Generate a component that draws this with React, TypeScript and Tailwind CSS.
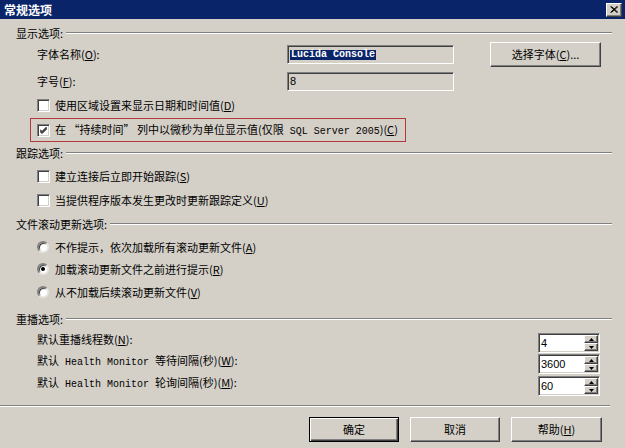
import React from "react";

const sunken =
  "border border-t-[#808080] border-l-[#808080] border-b-white border-r-white shadow-[inset_1px_1px_0_#404040,inset_-1px_-1px_0_#d4d0c8]";
const raised =
  "border border-t-white border-l-white border-b-[#404040] border-r-[#404040] shadow-[inset_-1px_-1px_0_#808080]";

const mono = "font-['Liberation_Mono',monospace] text-[10px]";

function Header({ label, cls }: { label: string; cls: string }) {
  return (
    <div className={"flex items-center h-[16px] " + cls}>
      <span>{label}</span>
      <div className="flex-1 ml-[3px] h-[2px] border-t border-t-[#808080] border-b border-b-white" />
    </div>
  );
}

function Check({ checked }: { checked?: boolean }) {
  return (
    <div className={"w-[13px] h-[13px] bg-white flex items-center justify-center shrink-0 " + sunken}>
      {checked && (
        <svg width="7" height="7" viewBox="0 0 7 7">
          <path d="M0 2 L2 4 L7 -1 M0 3 L2 5 L7 0 M0 4 L2 6 L7 1" stroke="#000" strokeWidth="1" fill="none" transform="translate(0,0.5)" />
        </svg>
      )}
    </div>
  );
}

function Radio({ checked }: { checked?: boolean }) {
  return (
    <div className="w-[12px] h-[12px] rounded-full bg-white border-2 border-t-[#808080] border-l-[#808080] border-r-[#e8e6e2] border-b-[#e8e6e2] shadow-[inset_1px_1px_0_#404040] flex items-center justify-center shrink-0">
      {checked && <div className="w-[4px] h-[4px] rounded-full bg-black" />}
    </div>
  );
}

function Spinner({ value, cls }: { value: string; cls: string }) {
  return (
    <div className={"w-[62px] h-[20px] bg-white flex items-stretch " + sunken + " " + cls}>
      <div className="flex-1 flex items-center pl-[2px] font-['Liberation_Sans',sans-serif] text-[11px]">{value}</div>
      <div className="w-[15px] flex flex-col py-[1px] pr-[1px]">
        <div className={"flex-1 bg-[#d4d0c8] flex items-center justify-center " + raised}>
          <svg width="5" height="3" viewBox="0 0 5 3"><path d="M2.5 0 L5 3 L0 3 Z" fill="#000" /></svg>
        </div>
        <div className={"flex-1 bg-[#d4d0c8] flex items-center justify-center " + raised}>
          <svg width="5" height="3" viewBox="0 0 5 3"><path d="M0 0 L5 0 L2.5 3 Z" fill="#000" /></svg>
        </div>
      </div>
    </div>
  );
}

function Btn({ children, def, cls }: { children: React.ReactNode; def?: boolean; cls?: string }) {
  const c = def
    ? "border border-black shadow-[inset_1px_1px_0_#ffffff,inset_-1px_-1px_0_#404040,inset_-2px_-2px_0_#808080]"
    : raised;
  return (
    <div className={"h-[25px] bg-[#d4d0c8] flex items-center justify-center " + c + " " + (cls || "")}>
      {children}
    </div>
  );
}

export default function App() {
  return (
    <div className="w-[625px] h-[448px] bg-[#d4d0c8] overflow-hidden font-['Noto_Sans_CJK_SC',sans-serif] text-[11px] text-black leading-none">
      <div className="h-[19px] bg-[#0a246a] flex items-center justify-between pl-[4px] pr-[3px]">
        <span className="text-white font-bold text-[12px]">常规选项</span>
        <div className={"w-[16px] h-[14px] bg-[#d4d0c8] flex items-center justify-center " + raised}>
          <svg width="8" height="7" viewBox="0 0 8 7">
            <path d="M0.5 0.5 L7 6.5 M1.5 0.5 L8 6.5 M7 0.5 L0.5 6.5 M8 0.5 L1.5 6.5" stroke="#000" strokeWidth="1" />
          </svg>
        </div>
      </div>

      <div className="pl-[16px] pr-[13px]">
        <Header label="显示选项:" cls="mt-[6px]" />

        <div className="flex items-center h-[25px] mt-[1px] pl-[21px]">
          <div className="w-[250px]">
            字体名称(<u>O</u>):
          </div>
          <div className={"w-[167px] h-[19px] flex items-center pl-[2px] " + sunken}>
            <span className={"bg-[#0a246a] text-white font-bold px-[1px] " + mono}>Lucida Console</span>
          </div>
          <Btn cls="w-[111px] ml-[36px]">
            选择字体(<u>C</u>)...
          </Btn>
        </div>

        <div className="flex items-center h-[20px] mt-[4px] pl-[21px]">
          <div className="w-[250px]">
            字号(<u>F</u>):
          </div>
          <div className={"w-[167px] h-[19px] flex items-center pl-[2px] font-['Liberation_Sans',sans-serif] " + sunken}>8</div>
        </div>

        <div className="flex items-center h-[16px] mt-[6px] pl-[21px]">
          <Check />
          <span className="ml-[5px]">
            使用区域设置来显示日期和时间值(<u>D</u>)
          </span>
        </div>

        <div className="flex items-center h-[24px] mt-[5px] ml-[14px] w-[376px] border border-[#b03a3a] pl-[6px]">
          <Check checked />
          <span className="ml-[5px] whitespace-nowrap">
            在 “持续时间” 列中以微秒为单位显示值(仅限<span className={mono}> SQL Server 2005</span>)(<u>C</u>)
          </span>
        </div>

        <Header label="跟踪选项:" cls="mt-[3px]" />

        <div className="flex items-center h-[16px] mt-[7px] pl-[21px]">
          <Check />
          <span className="ml-[5px]">
            建立连接后立即开始跟踪(<u>S</u>)
          </span>
        </div>
        <div className="flex items-center h-[16px] mt-[8px] pl-[21px]">
          <Check />
          <span className="ml-[5px]">
            当提供程序版本发生更改时更新跟踪定义(<u>U</u>)
          </span>
        </div>

        <Header label="文件滚动更新选项:" cls="mt-[8px]" />

        <div className="flex items-center h-[16px] mt-[7px] pl-[21px]">
          <Radio />
          <span className="ml-[6px]">
            不作提示，依次加载所有滚动更新文件(<u>A</u>)
          </span>
        </div>
        <div className="flex items-center h-[16px] mt-[6px] pl-[21px]">
          <Radio checked />
          <span className="ml-[6px]">
            加载滚动更新文件之前进行提示(<u>R</u>)
          </span>
        </div>
        <div className="flex items-center h-[16px] mt-[7px] pl-[21px]">
          <Radio />
          <span className="ml-[6px]">
            从不加载后续滚动更新文件(<u>V</u>)
          </span>
        </div>

        <Header label="重播选项:" cls="mt-[11px]" />

        <div className="flex items-start justify-between h-[20px] mt-[6px] pl-[21px] pr-[12px]">
          <span className="mt-[1px]">
            默认重播线程数(<u>N</u>):
          </span>
          <Spinner value="4" cls="" />
        </div>
        <div className="flex items-start justify-between h-[20px] mt-[1px] pl-[21px] pr-[12px]">
          <span className="mt-[1px] whitespace-nowrap">
            默认<span className={mono}> Health Monitor </span>等待间隔(秒)(<u>W</u>):
          </span>
          <Spinner value="3600" cls="" />
        </div>
        <div className="flex items-start justify-between h-[20px] mt-[2px] pl-[21px] pr-[12px]">
          <span className="mt-[1px] whitespace-nowrap">
            默认<span className={mono}> Health Monitor </span>轮询间隔(秒)(<u>M</u>):
          </span>
          <Spinner value="60" cls="" />
        </div>
      </div>

      <div className="mt-[9px] w-[610px] h-[2px] border-t border-t-[#808080] border-b border-b-white" />

      <div className="flex justify-end gap-[11px] pr-[23px] mt-[10px]">
        <Btn def cls="w-[90px]">确定</Btn>
        <Btn cls="w-[90px]">取消</Btn>
        <Btn cls="w-[91px]">
          帮助(<u>H</u>)
        </Btn>
      </div>
    </div>
  );
}
